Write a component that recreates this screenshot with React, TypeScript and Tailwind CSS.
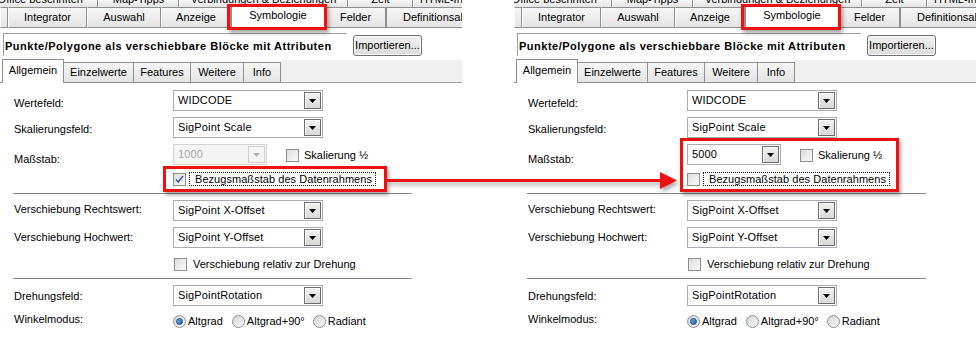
import React from "react";

const topTabs = [
  { label: "Office beschriften", cls: "w-[98px] justify-end pr-[14px]" },
  { label: "Map-Tipps", cls: "w-[81px] justify-center" },
  { label: "Verbindungen & Beziehungen", cls: "w-[169px] justify-center" },
  { label: "Zeit", cls: "w-[65px] justify-center" },
  { label: "HTML-Info", cls: "w-[80px] justify-start pl-[6px]" },
];

const midTabs = [
  { label: "", cls: "w-[8px]" },
  { label: "Integrator", cls: "w-[79px] justify-center" },
  { label: "Auswahl", cls: "w-[74px] justify-center" },
  { label: "Anzeige", cls: "w-[70px] justify-center" },
];

const subTabs = [
  { label: "Einzelwerte", cls: "w-[70px]" },
  { label: "Features", cls: "w-[57px]" },
  { label: "Weitere", cls: "w-[53px]" },
  { label: "Info", cls: "w-[37px]" },
];

const tabBg = "bg-gradient-to-b from-[#f6f6f6] to-[#e4e4e4]";

function Combo({
  value,
  wide = true,
  disabled = false,
}: {
  value: string;
  wide?: boolean;
  disabled?: boolean;
}) {
  return (
    <div
      className={`flex h-[21px] items-center justify-between border ${
        wide ? "w-[150px]" : "w-[94px]"
      } ${disabled ? "border-[#d5d5d5] bg-[#f4f4f4] text-[#a8a8a8]" : "border-[#abadb3] bg-white text-black"}`}
    >
      <span className="pl-[4px] leading-[13px] tracking-[0.15px]">{value}</span>
      <div
        className={`mr-[1px] flex h-[17px] w-[17px] items-center justify-center border ${
          disabled
            ? "border-[#d0d0d0] bg-[#f4f4f4]"
            : "border-[#6d6d6d] bg-gradient-to-b from-[#f2f2f2] to-[#d9d9d9] shadow-[inset_1px_1px_0_#ffffff]"
        }`}
      >
        <svg width="7" height="4" viewBox="0 0 7 4">
          <path d="M0 0h7L3.5 4z" fill={disabled ? "#b4b4b4" : "#000"} />
        </svg>
      </div>
    </div>
  );
}

function CheckBox({ checked = false }: { checked?: boolean }) {
  return (
    <div className="flex h-[13px] w-[13px] shrink-0 items-center justify-center border border-[#8e8f8f] bg-gradient-to-br from-[#dcdcdc] to-[#fbfbfb]">
      {checked && (
        <svg width="9" height="9" viewBox="0 0 9 9">
          <path d="M1 4.5l2.3 2.6L8 1" fill="none" stroke="#4a5a94" strokeWidth="1.6" />
        </svg>
      )}
    </div>
  );
}

function Radio({ checked = false }: { checked?: boolean }) {
  return (
    <div className="flex h-[13px] w-[13px] shrink-0 items-center justify-center rounded-full border border-[#8e8f8f] bg-gradient-to-br from-[#d4d4d4] to-[#fafafa]">
      {checked && (
        <div className="h-[7px] w-[7px] rounded-full border border-[#1c4f86] bg-gradient-to-br from-[#6fb4ee] to-[#1760a8]" />
      )}
    </div>
  );
}

function FieldRow({
  label,
  labelPad,
  className,
  children,
}: {
  label: string;
  labelPad: string;
  className: string;
  children: React.ReactNode;
}) {
  return (
    <div className={`flex items-start ${className}`}>
      <span className={`w-[159px] shrink-0 leading-[13px] ${labelPad}`}>{label}</span>
      {children}
    </div>
  );
}

function Panel({ after }: { after: boolean }) {
  return (
    <div className="relative flex w-[462px] shrink-0 flex-col overflow-hidden bg-white">
      {/* cut-off top tab row */}
      <div className="flex h-[7px] overflow-hidden">
        {topTabs.map((t) => (
          <div
            key={t.label}
            className={`flex h-full shrink-0 items-end whitespace-nowrap border-l border-r border-l-[#fbfbfb] border-r-[#8e8f8f] ${tabBg} ${t.cls}`}
          >
            <span className="-translate-y-[1px] leading-[13px]">{t.label}</span>
          </div>
        ))}
      </div>

      {/* second tab row */}
      <div className="flex h-[21px] items-end">
        {midTabs.map((t, i) => (
          <div
            key={i}
            className={`flex h-[21px] shrink-0 items-center whitespace-nowrap border border-l-[#fbfbfb] border-[#8e8f8f] ${tabBg} ${t.cls}`}
          >
            <span className="leading-[13px]">{t.label}</span>
          </div>
        ))}
        <div className="relative z-10 -mt-[2px] flex h-[23px] w-[94px] shrink-0 items-start justify-center border border-b-0 border-[#8e8f8f] bg-white pt-[3px]">
          <span className="leading-[13px]">Symbologie</span>
        </div>
        <div className={`flex h-[21px] w-[61px] shrink-0 items-center justify-center border border-[#8e8f8f] ${tabBg}`}>
          <span className="leading-[13px]">Felder</span>
        </div>
        <div className={`flex h-[21px] flex-1 items-center whitespace-nowrap border border-r-0 border-[#8e8f8f] pl-[16px] ${tabBg}`}>
          <span className="leading-[13px]">Definitionsabfrage</span>
        </div>
      </div>

      {/* title */}
      <div className="mt-[5px] flex items-start">
        <div className="ml-[3px] h-[23px] w-[344px] border-l border-t border-[#a0a0a0] pl-[1px] pt-[4px]">
          <span className="whitespace-nowrap font-bold leading-[13px] tracking-[0.5px]">
            Punkte/Polygone als verschiebbare Blöcke mit Attributen
          </span>
        </div>
        <button className="ml-[6px] mt-[2px] h-[21px] w-[69px] rounded-[3px] border border-[#707070] bg-gradient-to-b from-[#f2f2f2] to-[#dcdcdc] leading-[13px] shadow-[inset_0_0_0_1px_#fcfcfc]">
          Importieren...
        </button>
      </div>

      {/* sub tabs */}
      <div className="mt-[3px] flex h-[24px] items-end">
        <div className="w-[2px] self-stretch border-b border-[#8e8f8f]" />
        <div className="flex h-[24px] w-[62px] shrink-0 items-start justify-center border border-b-0 border-[#8e8f8f] bg-white pt-[4px]">
          <span className="leading-[13px]">Allgemein</span>
        </div>
        {subTabs.map((t) => (
          <div
            key={t.label}
            className={`flex h-[21px] shrink-0 items-center justify-center border border-l-0 border-[#8e8f8f] ${tabBg} ${t.cls}`}
          >
            <span className="leading-[13px]">{t.label}</span>
          </div>
        ))}
        <div className="h-[23px] flex-1 border-b border-[#a0a0a0] bg-[#f0f0f0]" />
      </div>

      {/* content */}
      <div className="flex flex-col pl-[14px]">
        <FieldRow label="Wertefeld:" labelPad="pt-[7px]" className="mt-[7px]">
          <Combo value="WIDCODE" />
        </FieldRow>
        <FieldRow label="Skalierungsfeld:" labelPad="pt-[6px]" className="mt-[6px]">
          <Combo value="SigPoint Scale" />
        </FieldRow>
        <FieldRow label="Maßstab:" labelPad="pt-[9px]" className="mt-[6px]">
          {after ? <Combo value="5000" wide={false} /> : <Combo value="1000" wide={false} disabled />}
          <div className="ml-[19px] mt-[5px] flex items-center gap-[5px]">
            <CheckBox />
            <span className="leading-[13px]">Skalierung ½</span>
          </div>
        </FieldRow>
        <div className="ml-[159px] mt-[6px] flex h-[14px] items-center">
          <CheckBox checked={!after} />
          <span className="ml-[3px] border border-dotted border-[#222] pl-[5px] pr-[3px] leading-[12px] tracking-[0.05px]">
            Bezugsmaßstab des Datenrahmens
          </span>
        </div>
        <div className="-ml-[1px] mt-[7px] h-px w-[399px] bg-[#8a8a8a]" />
        <FieldRow label="Verschiebung Rechtswert:" labelPad="pt-[3px]" className="mt-[6px]">
          <Combo value="SigPoint X-Offset" />
        </FieldRow>
        <FieldRow label="Verschiebung Hochwert:" labelPad="pt-[4px]" className="mt-[6px]">
          <Combo value="SigPoint Y-Offset" />
        </FieldRow>
        <div className="ml-[160px] mt-[10px] flex items-center gap-[6px]">
          <CheckBox />
          <span className="leading-[13px]">Verschiebung relativ zur Drehung</span>
        </div>
        <div className="-ml-[1px] mt-[7px] h-px w-[399px] bg-[#8a8a8a]" />
        <FieldRow label="Drehungsfeld:" labelPad="pt-[5px]" className="mt-[6px]">
          <Combo value="SigPointRotation" />
        </FieldRow>
        <FieldRow label="Winkelmodus:" labelPad="pt-[0px]" className="mt-[7px]">
          <div className="mt-[2px] flex items-center">
            <Radio checked />
            <span className="ml-[2px] leading-[13px]">Altgrad</span>
            <div className="ml-[9px]">
              <Radio />
            </div>
            <span className="ml-[2px] leading-[13px]">Altgrad+90°</span>
            <div className="ml-[8px]">
              <Radio />
            </div>
            <span className="ml-[2px] leading-[13px]">Radiant</span>
          </div>
        </FieldRow>
      </div>

      {/* red highlight boxes */}
      <div className="pointer-events-none absolute left-[227px] top-[4px] z-20 h-[26px] w-[100px] border-[3px] border-[#ee1111] shadow-[2px_3px_4px_rgba(0,0,0,0.35)]" />
      {after ? (
        <div className="pointer-events-none absolute left-[166px] top-[138px] z-20 h-[54px] w-[219px] border-[3px] border-[#ee1111] shadow-[2px_3px_4px_rgba(0,0,0,0.35)]" />
      ) : (
        <div className="pointer-events-none absolute left-[163px] top-[166px] z-20 h-[26px] w-[224px] border-[3px] border-[#ee1111] shadow-[2px_3px_4px_rgba(0,0,0,0.35)]" />
      )}
    </div>
  );
}

export default function App() {
  return (
    <div className="relative flex h-[341px] w-[976px] gap-[52px] overflow-hidden bg-white font-['Liberation_Sans',Arial,sans-serif] text-[11px] text-black">
      <Panel after={false} />
      <Panel after />
      {/* arrow between the two highlights */}
      <svg
        className="pointer-events-none absolute left-[386px] top-[170px] z-30 drop-shadow-[2px_3px_2px_rgba(0,0,0,0.35)]"
        width="294"
        height="22"
        viewBox="0 0 294 22"
      >
        <path d="M0 10.5H278" stroke="#ee1111" strokeWidth="3" />
        <path d="M274 2L291 10.5L274 19z" fill="#ee1111" />
      </svg>
    </div>
  );
}
